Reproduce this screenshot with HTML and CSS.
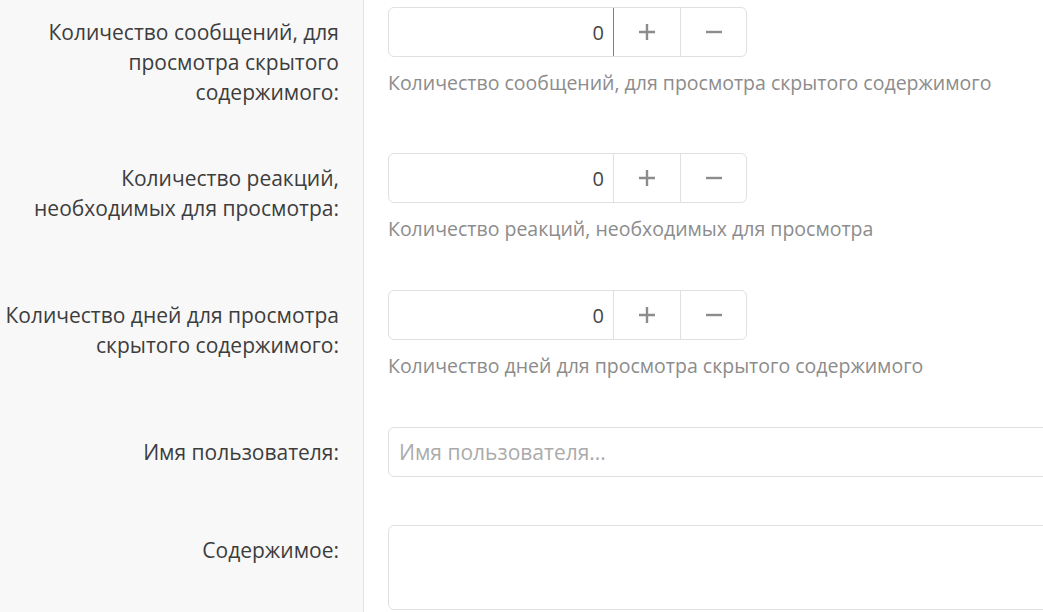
FILE: index.html
```html
<!DOCTYPE html>
<html lang="ru">
<head>
    <meta charset="UTF-8">
    <meta name="viewport" content="width=device-width, initial-scale=1.0">
    <title>Скрытое содержимое</title>
    <link rel="stylesheet" href="styles.css">
</head>
<body>
    <div class="form">
        <div class="form-row">
            <div class="form-label">Количество сообщений, для просмотра скрытого содержимого:</div>
            <div class="form-field">
                <div class="spinbox">
                    <input type="text" class="spinbox-input is-focused" value="0">
                    <button class="spinbox-btn"><svg viewBox="0 0 18 18"><path d="M9 1v16M1 9h16"/></svg></button>
                    <button class="spinbox-btn"><svg viewBox="0 0 18 18"><path d="M1 9h16"/></svg></button>
                </div>
                <div class="form-hint">Количество сообщений, для просмотра скрытого содержимого</div>
            </div>
        </div>

        <div class="form-row">
            <div class="form-label">Количество реакций, необходимых для просмотра:</div>
            <div class="form-field">
                <div class="spinbox">
                    <input type="text" class="spinbox-input" value="0">
                    <button class="spinbox-btn"><svg viewBox="0 0 18 18"><path d="M9 1v16M1 9h16"/></svg></button>
                    <button class="spinbox-btn"><svg viewBox="0 0 18 18"><path d="M1 9h16"/></svg></button>
                </div>
                <div class="form-hint">Количество реакций, необходимых для просмотра</div>
            </div>
        </div>

        <div class="form-row">
            <div class="form-label">Количество дней для просмотра скрытого содержимого:</div>
            <div class="form-field">
                <div class="spinbox">
                    <input type="text" class="spinbox-input" value="0">
                    <button class="spinbox-btn"><svg viewBox="0 0 18 18"><path d="M9 1v16M1 9h16"/></svg></button>
                    <button class="spinbox-btn"><svg viewBox="0 0 18 18"><path d="M1 9h16"/></svg></button>
                </div>
                <div class="form-hint">Количество дней для просмотра скрытого содержимого</div>
            </div>
        </div>

        <div class="form-row">
            <div class="form-label">Имя пользователя:</div>
            <div class="form-field">
                <input type="text" class="text-input" placeholder="Имя пользователя...">
            </div>
        </div>

        <div class="form-row">
            <div class="form-label">Содержимое:</div>
            <div class="form-field">
                <textarea class="text-input textarea"></textarea>
            </div>
        </div>
    </div>
</body>
</html>
```

FILE: styles.css
```css
* {
    margin: 0;
    padding: 0;
    box-sizing: border-box;
}

html, body {
    height: 100%;
    overflow: hidden;
}

body {
    font-family: 'Open Sans', 'Noto Sans', sans-serif;
    font-size: 21px;
    line-height: 30px;
    color: #3d3d3d;
    background: #fff;
}

/* левая колонка с подписями и разделитель */
.form {
    min-height: 100%;
    background: linear-gradient(to right, #f8f8f8 0, #f8f8f8 363px, #e3e3e3 363px, #e3e3e3 364px, #fff 364px);
}

.form-row {
    display: grid;
    grid-template-columns: 364px 1fr;
}

.form-label {
    text-align: right;
    padding: 17px 25px 39px 0;
}

.form-field {
    padding: 7px 0 41px 24px;
}

/* числовое поле с кнопками +/- */
.spinbox {
    display: flex;
    width: 359px;
    height: 50px;
    border: 1px solid #e0e0e0;
    border-radius: 6px;
    background: #fff;
}

.spinbox-input {
    width: 225px;
    border: none;
    border-radius: 6px 0 0 6px;
    border-right: 1px solid #e0e0e0;
    padding: 0 9px;
    text-align: right;
    font-family: inherit;
    font-size: 20px;
    color: #454545;
    background: transparent;
    outline: none;
}

.spinbox-input.is-focused {
    border-right-color: #3d8fd6;
}

.spinbox-btn {
    display: flex;
    align-items: center;
    justify-content: center;
    width: 67px;
    border: none;
    background: transparent;
    cursor: pointer;
}

.spinbox-btn svg {
    width: 18px;
    height: 18px;
    fill: none;
    stroke: #8c8c8c;
    stroke-width: 2.4;
}

.spinbox-btn + .spinbox-btn {
    border-left: 1px solid #e0e0e0;
}

.form-hint {
    margin: 11px 0 -2px;
    font-size: 19.5px;
    color: #8c8c8c;
}

.text-input {
    display: block;
    width: 720px;
    height: 50px;
    border: 1px solid #e0e0e0;
    border-radius: 6px;
    padding: 0 10px;
    font-family: inherit;
    font-size: 21px;
    color: #3d3d3d;
    background: #fff;
    outline: none;
}

.text-input::placeholder {
    color: #ababab;
}

.textarea {
    height: 85px;
    resize: none;
}
```
